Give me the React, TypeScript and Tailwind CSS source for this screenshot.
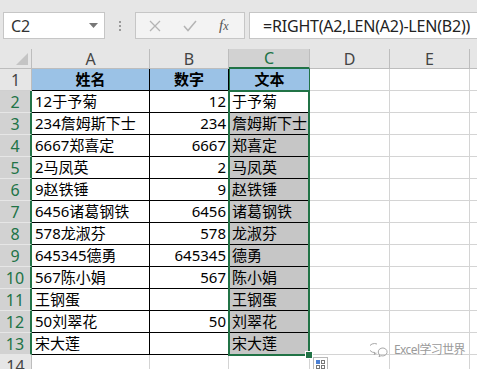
import React from 'react';

const rows: [string, string, string][] = [
  ['12于予菊', '12', '于予菊'],
  ['234詹姆斯下士', '234', '詹姆斯下士'],
  ['6667郑喜定', '6667', '郑喜定'],
  ['2马凤英', '2', '马凤英'],
  ['9赵铁锤', '9', '赵铁锤'],
  ['6456诸葛钢铁', '6456', '诸葛钢铁'],
  ['578龙淑芬', '578', '龙淑芬'],
  ['645345德勇', '645345', '德勇'],
  ['567陈小娟', '567', '陈小娟'],
  ['王钢蛋', '', '王钢蛋'],
  ['50刘翠花', '50', '刘翠花'],
  ['宋大莲', '', '宋大莲'],
];

const font = "font-['Noto_Sans','Noto_Sans_CJK_SC',sans-serif]";
const gridCols = 'grid grid-cols-[32px_118px_79px_81px_80px_80px_1fr]';

const FormulaBar = () => (
  <div className="h-[49px] bg-[#e6e6e6] flex items-start pt-[12px] pl-[3px]">
    <div className="w-[102px] h-[27px] bg-white border border-[#c6c6c6] flex items-center justify-between pl-[7px] pr-[6px]">
      <span className="text-[16px] text-[#333] leading-none">C2</span>
      <svg width="9" height="5" viewBox="0 0 9 5">
        <path d="M0 0h9L4.5 5z" fill="#777" />
      </svg>
    </div>
    <div className="w-[30px] h-[27px] flex flex-col items-center justify-center gap-[2px]">
      <span className="w-[2px] h-[2px] bg-[#9a9a9a]" />
      <span className="w-[2px] h-[2px] bg-[#9a9a9a]" />
      <span className="w-[2px] h-[2px] bg-[#9a9a9a]" />
    </div>
    <div className="w-[110px] h-[27px] bg-[#f3f3f3] border border-[#c6c6c6] flex items-center pl-[13px] gap-[22px]">
      <svg width="12" height="12" viewBox="0 0 12 12">
        <path d="M1 1l10 10M11 1L1 11" stroke="#b4b4b4" strokeWidth="1.3" />
      </svg>
      <svg width="14" height="12" viewBox="0 0 14 12">
        <path d="M1 6l4 4.5L13 1" stroke="#b4b4b4" strokeWidth="1.5" fill="none" />
      </svg>
      <span className="text-[15px] italic text-[#555] font-['Liberation_Serif',serif] leading-none">
        f<span className="text-[12px]">x</span>
      </span>
    </div>
    <div className="ml-[4px] flex-1 h-[27px] bg-white border border-[#c6c6c6] border-r-0 flex items-center pl-[13px]">
      <span className={`${font} text-[16px] text-[#222] leading-none tracking-[-0.2px]`}>=RIGHT(A2,LEN(A2)-LEN(B2))</span>
    </div>
  </div>
);

const ColumnHeaders = () => {
  const base = `h-[20px] flex items-center justify-center text-[16px] leading-none border-r border-b ${font}`;
  return (
    <div className={gridCols}>
      <div className="h-[20px] bg-[#e6e6e6] border-r border-b border-[#bdbdbd] flex items-end justify-end pr-[3px] pb-[3px]">
        <svg width="12" height="12" viewBox="0 0 12 12">
          <path d="M12 0v12H0z" fill="#c4c4c4" />
        </svg>
      </div>
      <div className={`${base} bg-[#e6e6e6] border-[#bdbdbd] text-[#444]`}>A</div>
      <div className={`${base} bg-[#e6e6e6] border-[#bdbdbd] text-[#444]`}>B</div>
      <div className={`${base} bg-[#d2d2d2] border-r-[#bdbdbd] border-b-2 border-b-[#217346] text-[#217346]`}>C</div>
      <div className={`${base} bg-[#e6e6e6] border-[#bdbdbd] text-[#444]`}>D</div>
      <div className={`${base} bg-[#e6e6e6] border-[#bdbdbd] text-[#444]`}>E</div>
      <div className="h-[20px] bg-[#e6e6e6] border-b border-[#bdbdbd]" />
    </div>
  );
};

const RowHeader = ({ n, active }: { n: number; active: boolean }) => (
  <div
    className={`h-[22px] flex items-center justify-center text-[16px] leading-none border-b ${font} ${
      active
        ? 'bg-[#d2d2d2] text-[#217346] border-b-[#e6e6e6] border-r-2 border-r-[#217346]'
        : 'bg-[#e6e6e6] text-[#444] border-b-[#d0d0d0] border-r border-r-[#bdbdbd]'
    }`}
  >
    {n}
  </div>
);

const cell = `h-[22px] flex items-center text-[15px] leading-none text-black border-r border-b border-black whitespace-nowrap overflow-hidden ${font}`;
const blank = 'h-[22px] border-r border-b border-[#d4d4d4] bg-white';

export default function App() {
  return (
    <div className="w-[477px] h-[369px] overflow-hidden bg-white relative">
      <FormulaBar />
      <ColumnHeaders />
      <div className="relative">
        <div className={gridCols}>
          <RowHeader n={1} active={false} />
          <div className={`${cell} bg-[#9bc2e6] justify-center font-bold`}>姓名</div>
          <div className={`${cell} bg-[#9bc2e6] justify-center font-bold`}>数字</div>
          <div className={`${cell} bg-[#9bc2e6] justify-center font-bold border-l border-l-[#217346] border-r-[#217346]`}>文本</div>
          <div className={blank} />
          <div className={blank} />
          <div className="h-[22px] border-b border-[#d4d4d4]" />
        </div>
        {rows.map(([a, b, c], i) => (
          <div key={i} className={gridCols}>
            <RowHeader n={i + 2} active />
            <div className={`${cell} bg-white pl-[3px]`}>{a}</div>
            <div className={`${cell} bg-white justify-end pr-[2px]`}>{b}</div>
            <div className={`${cell} pl-[3px] ${i === 0 ? 'bg-white' : 'bg-[#c6c6c6]'}`}>{c}</div>
            <div className={blank} />
            <div className={blank} />
            <div className="h-[22px] border-b border-[#d4d4d4]" />
          </div>
        ))}
        <div className={gridCols}>
          <RowHeader n={14} active={false} />
          <div className={blank} />
          <div className={blank} />
          <div className={blank} />
          <div className={blank} />
          <div className={blank} />
          <div className="h-[22px] border-b border-[#d4d4d4]" />
        </div>

        {/* selection frame over C2:C13 */}
        <div className="absolute left-[228px] top-[21px] w-[82px] h-[266px] border-2 border-[#217346] pointer-events-none" />
        {/* fill handle */}
        <div className="absolute left-[306px] top-[283px] w-[6px] h-[6px] bg-[#217346] outline outline-1 outline-white" />
        {/* quick analysis */}
        <div className="absolute left-[313px] top-[288px] w-[15px] h-[14px] bg-white border border-[#b9b9b9] flex flex-col gap-[1px] p-[2px]">
          <div className="flex gap-[1px]">
            <span className="w-[5px] h-[4px] bg-[#4a7fd4]" />
            <span className="w-[4px] h-[4px] border border-[#777]" />
          </div>
          <div className="flex gap-[1px]">
            <span className="w-[5px] h-[4px] border border-[#777]" />
            <span className="w-[4px] h-[4px] border border-[#777]" />
          </div>
        </div>
        {/* watermark */}
        <div className="absolute left-[370px] top-[273px] flex items-center gap-[6px] text-[#9a9a9a]">
          <svg width="18" height="16" viewBox="0 0 18 16" fill="none" stroke="#a8a8a8" strokeWidth="1">
            <path d="M7 2a5.5 4.5 0 1 0 -2 8.5l-1 2 2.5-1.3" />
            <path d="M12 6a4.5 4 0 1 1 -1 7.7l-2 1 .7-1.8A4.5 4 0 0 1 12 6z" />
          </svg>
          <span className={`${font} text-[12px] leading-none tracking-[-0.6px]`}>Excel学习世界</span>
        </div>
      </div>
    </div>
  );
}
